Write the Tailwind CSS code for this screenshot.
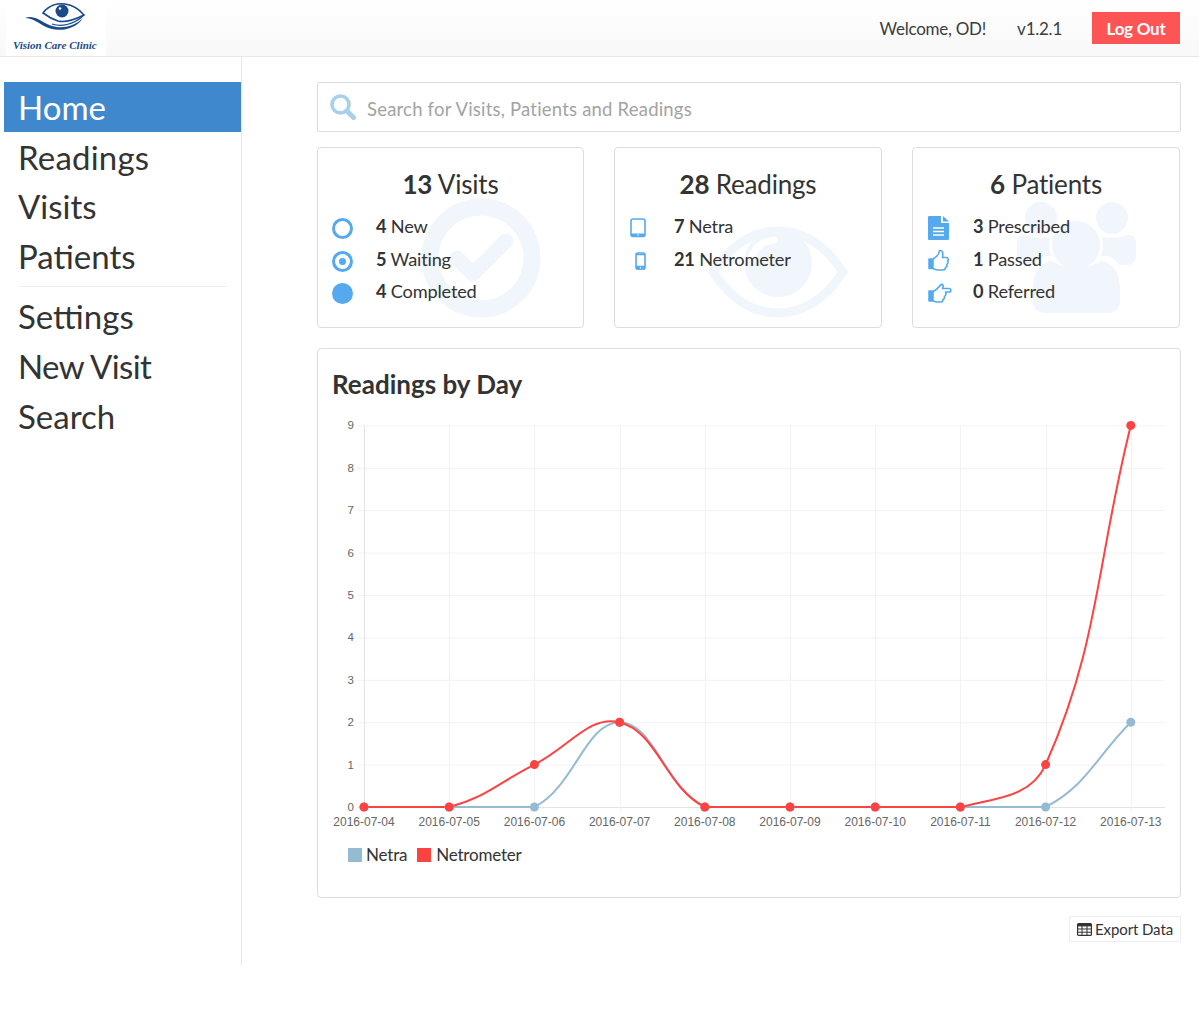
<!DOCTYPE html>
<html lang="en">

<head>
    <meta charset="UTF-8">
    <meta name="viewport" content="width=device-width, initial-scale=1.0">
    <title>Vision Care Clinic</title>
    <script src="https://cdn.jsdelivr.net/npm/@tailwindcss/browser@4"></script>
</head>

<body class="bg-white text-[#333] font-['Lato','Noto_Sans',sans-serif]">
    <!-- top bar -->
    <header class="h-[57px] flex items-center justify-between border-b border-[#e7e7e7] bg-gradient-to-b from-white to-[#f8f8f8] pr-[19px] pl-[6px]">
        <div class="w-[100px] h-[56px] bg-white flex flex-col items-center relative">
            <svg width="100" height="40" viewBox="0 0 100 40" fill="none" class="shrink-0">
                <path d="M37 13 C43 5 52 3 59 4 C66 5 73 9 78 15 C70 19 60 23 52 21 C46 19 41 16 37 13Z" stroke="#1a4a8a" stroke-width="1.6" fill="#fff" />
                <circle cx="56" cy="11" r="6.5" fill="#1a4a8a" />
                <circle cx="54" cy="8.5" r="1.3" fill="#fff" />
                <path d="M19 18 C27 15 33 20 41 24 C50 29 66 29 77 18 C68 32 48 32 38 26 C31 22 26 18 19 18Z" fill="#1a4a8a" />
                <path d="M46 24 C55 27 67 25 77 16" stroke="#1a4a8a" stroke-width="1.2" />
            </svg>
            <span class="absolute left-[7px] top-[38px] text-[11px] leading-[14px] italic font-bold text-[#1a4a8a] font-['Liberation_Serif',serif] whitespace-nowrap">Vision Care Clinic</span>
        </div>
        <div class="flex items-center text-[17px] text-[#3c3c3c] tracking-[-0.25px]">
            <span class="mt-[2px]">Welcome, OD!</span>
            <span class="ml-[31px] mt-[2px]">v1.2.1</span>
            <button class="ml-[30px] w-[88px] h-[32px] bg-[#fd5555] text-white font-bold text-[17px] pt-[1px]">Log Out</button>
        </div>
    </header>

    <div class="flex">
        <!-- side menu -->
        <nav class="w-[242px] h-[908px] shrink-0 border-r border-[#e7e7e7] pt-[25px] pl-[4px] text-[33px] leading-[49.7px] text-[#333]">
            <a class="block h-[50px] bg-[#3f88cd] text-white pl-[14px] pt-[1px] leading-[49px]">Home</a>
            <a class="block pl-[14px] mt-[1px] tracking-[0.2px]">Readings</a>
            <a class="block pl-[14px] -mt-[1px]">Visits</a>
            <a class="block pl-[14px] mt-[1px]">Patients</a>
            <div class="ml-[15px] mr-[14px] border-t border-[#eeeeee] mt-[4px] mb-[5px]"></div>
            <a class="block pl-[14px]">Settings</a>
            <a class="block pl-[14px] tracking-[-0.6px]">New Visit</a>
            <a class="block pl-[14px]">Search</a>
        </nav>

        <main class="flex-1 pl-[75px] pr-[18px] pt-[25px]">
            <!-- search -->
            <div class="h-[50px] border border-[#dddddd] rounded-[2px] flex items-center pl-[12px]">
                <svg width="26" height="26" viewBox="0 0 26 26" fill="none" stroke="#a8d0ea">
                    <circle cx="10.5" cy="10.5" r="8.5" stroke-width="3.6" />
                    <path d="M17 17 L23.5 23.5" stroke-width="5" stroke-linecap="round" />
                </svg>
                <span class="ml-[11px] mt-[5px] text-[18.5px] text-[#a3a3a3] tracking-[0.2px]">Search for Visits, Patients and Readings</span>
            </div>

            <!-- summary cards -->
            <div class="flex gap-[30px] mt-[15px]">
                <section class="relative w-[267px] h-[181px] border border-[#dddddd] rounded-[4px] overflow-hidden">
                    <svg class="absolute left-[103px] top-[50px]" width="120" height="120" viewBox="0 0 120 120" fill="none">
                        <circle cx="60" cy="60" r="51" stroke="#f0f6fb" stroke-width="17" />
                        <path d="M36 60 L52 76 L85 43" stroke="#f0f6fb" stroke-width="15" stroke-linejoin="round" stroke-linecap="round" />
                    </svg>
                    <h2 class="relative text-center text-[26px] leading-[34px] mt-[19px] tracking-[-0.2px]"><b class="font-bold">13</b> Visits</h2>
                    <ul class="relative mt-[9px] text-[18.2px] leading-[32.6px] tracking-[-0.2px]">
                        <li class="flex items-center pl-[14px]">
                            <span class="w-[21px] h-[21px] mt-[5px] rounded-full border-[3px] border-[#55a9ee]"></span>
                            <span class="ml-[23px]"><b class="font-bold">4</b> New</span>
                        </li>
                        <li class="flex items-center pl-[14px]">
                            <span class="w-[21px] h-[21px] mt-[5px] rounded-full border-[3px] border-[#55a9ee] flex items-center justify-center"><span class="w-[7px] h-[7px] rounded-full bg-[#55a9ee]"></span></span>
                            <span class="ml-[23px]"><b class="font-bold">5</b> Waiting</span>
                        </li>
                        <li class="flex items-center pl-[14px]">
                            <span class="w-[21px] h-[21px] mt-[5px] rounded-full bg-[#55a9ee]"></span>
                            <span class="ml-[23px]"><b class="font-bold">4</b> Completed</span>
                        </li>
                    </ul>
                </section>

                <section class="relative w-[268px] h-[181px] border border-[#dddddd] rounded-[4px] overflow-hidden">
                    <svg class="absolute left-[93px] top-[78px]" width="140" height="92" viewBox="0 0 140 92" fill="none">
                        <path d="M5 46 C25 16 48 5 70 5 C92 5 115 16 135 46 C115 76 92 87 70 87 C48 87 25 76 5 46Z" stroke="#f0f6fb" stroke-width="9" stroke-linejoin="round" />
                        <circle cx="70" cy="37" r="34" fill="#f0f6fb" />
                        <path d="M44 30 C48 20 56 15 66 14" stroke="#fff" stroke-width="7" stroke-linecap="round" />
                    </svg>
                    <h2 class="relative text-center text-[26px] leading-[34px] mt-[19px] tracking-[-0.2px]"><b class="font-bold">28</b> Readings</h2>
                    <ul class="relative mt-[9px] text-[18.2px] leading-[32.6px] tracking-[-0.2px]">
                        <li class="flex items-center pl-[15px]">
                            <svg width="16" height="20" viewBox="0 0 16 20" fill="none" class="mt-[4px]">
                                <rect x="1" y="1" width="14" height="17.5" rx="2" stroke="#55a9ee" stroke-width="1.6" />
                                <path d="M1 15.5 H15 V17 a2 2 0 0 1 -2 2 H3 a2 2 0 0 1 -2 -2Z" fill="#55a9ee" />
                                <circle cx="8" cy="17" r="0.8" fill="#fff" />
                            </svg>
                            <span class="ml-[28px]"><b class="font-bold">7</b> Netra</span>
                        </li>
                        <li class="flex items-center pl-[20px]">
                            <svg width="11" height="18" viewBox="0 0 11 18" fill="none" class="mt-[4px]">
                                <rect x="1" y="1" width="9" height="16" rx="1.8" stroke="#55a9ee" stroke-width="1.6" />
                                <path d="M1 2.5 H10 M1 14.5 H10" stroke="#55a9ee" stroke-width="1.6" />
                                <path d="M1 14 H10 V16 a1.5 1.5 0 0 1 -1.5 1.5 H2.5 A1.5 1.5 0 0 1 1 16Z" fill="#55a9ee" />
                                <circle cx="5.5" cy="15.8" r="0.7" fill="#fff" />
                            </svg>
                            <span class="ml-[28px]"><b class="font-bold">21</b> Netrometer</span>
                        </li>
                    </ul>
                </section>

                <section class="relative w-[268px] h-[181px] border border-[#dddddd] rounded-[4px] overflow-hidden">
                    <svg class="absolute left-[103px] top-[52px]" width="122" height="116" viewBox="0 0 122 116" fill="none">
                        <circle cx="25" cy="18" r="16" fill="#f0f6fb" />
                        <circle cx="96" cy="18" r="16" fill="#f0f6fb" />
                        <path d="M1 44 C1 37 5 34 10 35 C18 39 32 39 40 35 L60 65 H10 C4 65 1 61 1 56Z" fill="#f0f6fb" />
                        <path d="M81 35 C89 39 103 39 111 35 C116 34 120 37 120 44 V56 C120 61 117 65 111 65 H61Z" fill="#f0f6fb" />
                        <circle cx="60" cy="45" r="27" fill="#fff" />
                        <path d="M13 115 V85 C13 68 20 57 32 56 H89 C101 57 108 68 108 85 V115Z" fill="#fff" />
                        <circle cx="60" cy="45" r="24" fill="#f0f6fb" />
                        <path d="M17 97 V89 C17 73 24 62 36 61 C46 69 75 69 85 61 C97 62 104 73 104 89 V101 C104 109 99 113 92 113 H29 C22 113 17 108 17 101Z" fill="#f0f6fb" />
                    </svg>
                    <h2 class="relative text-center text-[26px] leading-[34px] mt-[19px] tracking-[-0.2px]"><b class="font-bold">6</b> Patients</h2>
                    <ul class="relative mt-[9px] text-[18.2px] leading-[32.6px] tracking-[-0.2px]">
                        <li class="flex items-center pl-[15px]">
                            <svg width="21" height="24" viewBox="0 0 21 24" class="mt-[4px]">
                                <path d="M1 0 H13 V7 H21 V23 a1 1 0 0 1 -1 1 H1 a1 1 0 0 1 -1 -1 V1 a1 1 0 0 1 1 -1Z" fill="#55a9ee" />
                                <path d="M15 0 L21 5.5 H15Z" fill="#55a9ee" />
                                <path d="M5 12 H16 M5 15.5 H16 M5 19 H16" stroke="#fff" stroke-width="1.5" />
                            </svg>
                            <span class="ml-[24px]"><b class="font-bold">3</b> Prescribed</span>
                        </li>
                        <li class="flex items-center pl-[15px]">
                            <svg width="21" height="22" viewBox="0 0 21 22" fill="none" class="mt-[3px]">
                                <path d="M1 10 H5 V19.5 H1Z" fill="#55a9ee" stroke="#55a9ee" stroke-width="1.5" stroke-linejoin="round" />
                                <path d="M5 10 C9 8 11 5 11.5 1.5 C14.5 1 15.5 4 14.5 8.5 H18.5 C20.5 8.5 20.5 11.5 19.5 12 C20.5 13.5 19.8 15 18.8 15.5 C19.2 17 18.5 18.3 17.5 18.6 C17.5 20.3 16.5 21 15 21 H10 C8 21 6.5 20 5 19.5" stroke="#55a9ee" stroke-width="1.6" stroke-linejoin="round" />
                            </svg>
                            <span class="ml-[24px]"><b class="font-bold">1</b> Passed</span>
                        </li>
                        <li class="flex items-center pl-[15px]">
                            <svg width="24" height="20" viewBox="0 0 24 20" fill="none" class="mt-[4px]">
                                <path d="M1 8 H5 V18 H1Z" fill="#55a9ee" stroke="#55a9ee" stroke-width="1.5" stroke-linejoin="round" />
                                <path d="M5 8.5 C8 7.5 10 5 13 1.5 C15 1 16 3 14.5 5.5 H21 C23.5 5.5 23.5 9 21 9 H17.5 C18.5 11 17.5 13 16.5 13.5 C16.8 15 16 16 15 16.5 C15 18 14 19 12.5 19 H9 C7.5 19 6.5 18.5 5 18" stroke="#55a9ee" stroke-width="1.6" stroke-linejoin="round" />
                            </svg>
                            <span class="ml-[21px]"><b class="font-bold">0</b> Referred</span>
                        </li>
                    </ul>
                </section>
            </div>

            <!-- chart panel -->
            <section class="mt-[20px] h-[550px] border border-[#dddddd] rounded-[4px] px-[14px]">
                <h3 class="text-[26px] leading-[34px] font-bold text-[#333] mt-[18px]">Readings by Day</h3>
                <svg id="chart" width="834" height="415" viewBox="0 0 834 415" class="block mt-[14px]"></svg>
                <div class="flex items-center text-[17px] leading-[24px] tracking-[-0.2px] ml-[16px] mt-[13px]">
                    <span class="w-[14px] h-[14px] bg-[#95bbd2] mr-[4px]"></span><span>Netra</span>
                    <span class="w-[14px] h-[14px] bg-[#fd4242] ml-[10px] mr-[5px]"></span><span>Netrometer</span>
                </div>
            </section>

            <div class="flex justify-end mt-[18px]">
                <button class="w-[112px] h-[26px] border border-[#eeeeee] flex items-center justify-center text-[15px] text-[#333] tracking-[-0.1px]">
                    <svg width="15" height="13" viewBox="0 0 15 13" fill="none" stroke="#333" class="mr-[3px]">
                        <rect x="0.6" y="0.6" width="13.8" height="11.8" rx="1" stroke-width="1.2" />
                        <path d="M0.6 2.2 H14.4" stroke-width="2.4" />
                        <path d="M0.6 6 H14.4 M0.6 9.2 H14.4 M5 3 V12.4 M10 3 V12.4" stroke-width="1" />
                    </svg>
                    Export Data
                </button>
            </div>
        </main>
    </div>

    <script>
        // readings per day, drawn the way the charting lib does it (tension .4)
        const days = ['2016-07-04', '2016-07-05', '2016-07-06', '2016-07-07', '2016-07-08', '2016-07-09', '2016-07-10', '2016-07-11', '2016-07-12', '2016-07-13'];
        const netra = [0, 0, 0, 2, 0, 0, 0, 0, 0, 2];
        const netrometer = [0, 0, 1, 2, 0, 0, 0, 0, 1, 9];
        const left = 32, stepX = 85.2, bottom = 392, stepY = 42.4;
        const topY = bottom - 9 * stepY;

        const toPoints = data => data.map((v, i) => ({ x: left + i * stepX, y: bottom - v * stepY }));

        function splinePath(pts) {
            const t = 0.4;
            const cps = pts.map((p, i) => {
                const a = pts[i - 1] || p, b = pts[i + 1] || p;
                const d1 = Math.hypot(p.x - a.x, p.y - a.y), d2 = Math.hypot(b.x - p.x, b.y - p.y);
                const s1 = d1 / (d1 + d2) || 0, s2 = d2 / (d1 + d2) || 0;
                const clamp = y => Math.min(bottom, Math.max(topY, y));
                return {
                    px: p.x - t * s1 * (b.x - a.x), py: clamp(p.y - t * s1 * (b.y - a.y)),
                    nx: p.x + t * s2 * (b.x - a.x), ny: clamp(p.y + t * s2 * (b.y - a.y))
                };
            });
            let d = `M${pts[0].x} ${pts[0].y}`;
            for (let i = 1; i < pts.length; i++) {
                d += ` C${cps[i - 1].nx} ${cps[i - 1].ny} ${cps[i].px} ${cps[i].py} ${pts[i].x} ${pts[i].y}`;
            }
            return d;
        }

        let out = '';
        for (let v = 0; v <= 9; v++) {
            const y = bottom - v * stepY + 0.5;
            out += `<line x1="26" x2="833" y1="${y}" y2="${y}" stroke="${v === 0 ? '#e3e3e3' : '#f2f2f2'}"/>`;
            out += `<text x="22" y="${y + 3.5}" text-anchor="end" font-family="Liberation Sans" font-size="11.5" fill="#666">${v}</text>`;
        }
        days.forEach((day, i) => {
            const x = Math.round(left + i * stepX) + 0.5;
            out += `<line x1="${x}" x2="${x}" y1="${topY}" y2="${bottom + 5}" stroke="${i === 0 ? '#e3e3e3' : '#f2f2f2'}"/>`;
            out += `<text x="${left + i * stepX}" y="411" text-anchor="middle" font-family="Liberation Sans" font-size="12" fill="#666">${day}</text>`;
        });

        [[netra, '#95bbd2'], [netrometer, '#fd4242']].forEach(([data, color]) => {
            const pts = toPoints(data);
            out += `<path d="${splinePath(pts)}" fill="none" stroke="${color}" stroke-width="2"/>`;
        });
        [[netra, '#95bbd2'], [netrometer, '#fd4242']].forEach(([data, color]) => {
            toPoints(data).forEach(p => {
                out += `<circle cx="${p.x}" cy="${p.y}" r="4.5" fill="${color}"/>`;
            });
        });
        document.getElementById('chart').innerHTML = out;
    </script>
</body>

</html>
